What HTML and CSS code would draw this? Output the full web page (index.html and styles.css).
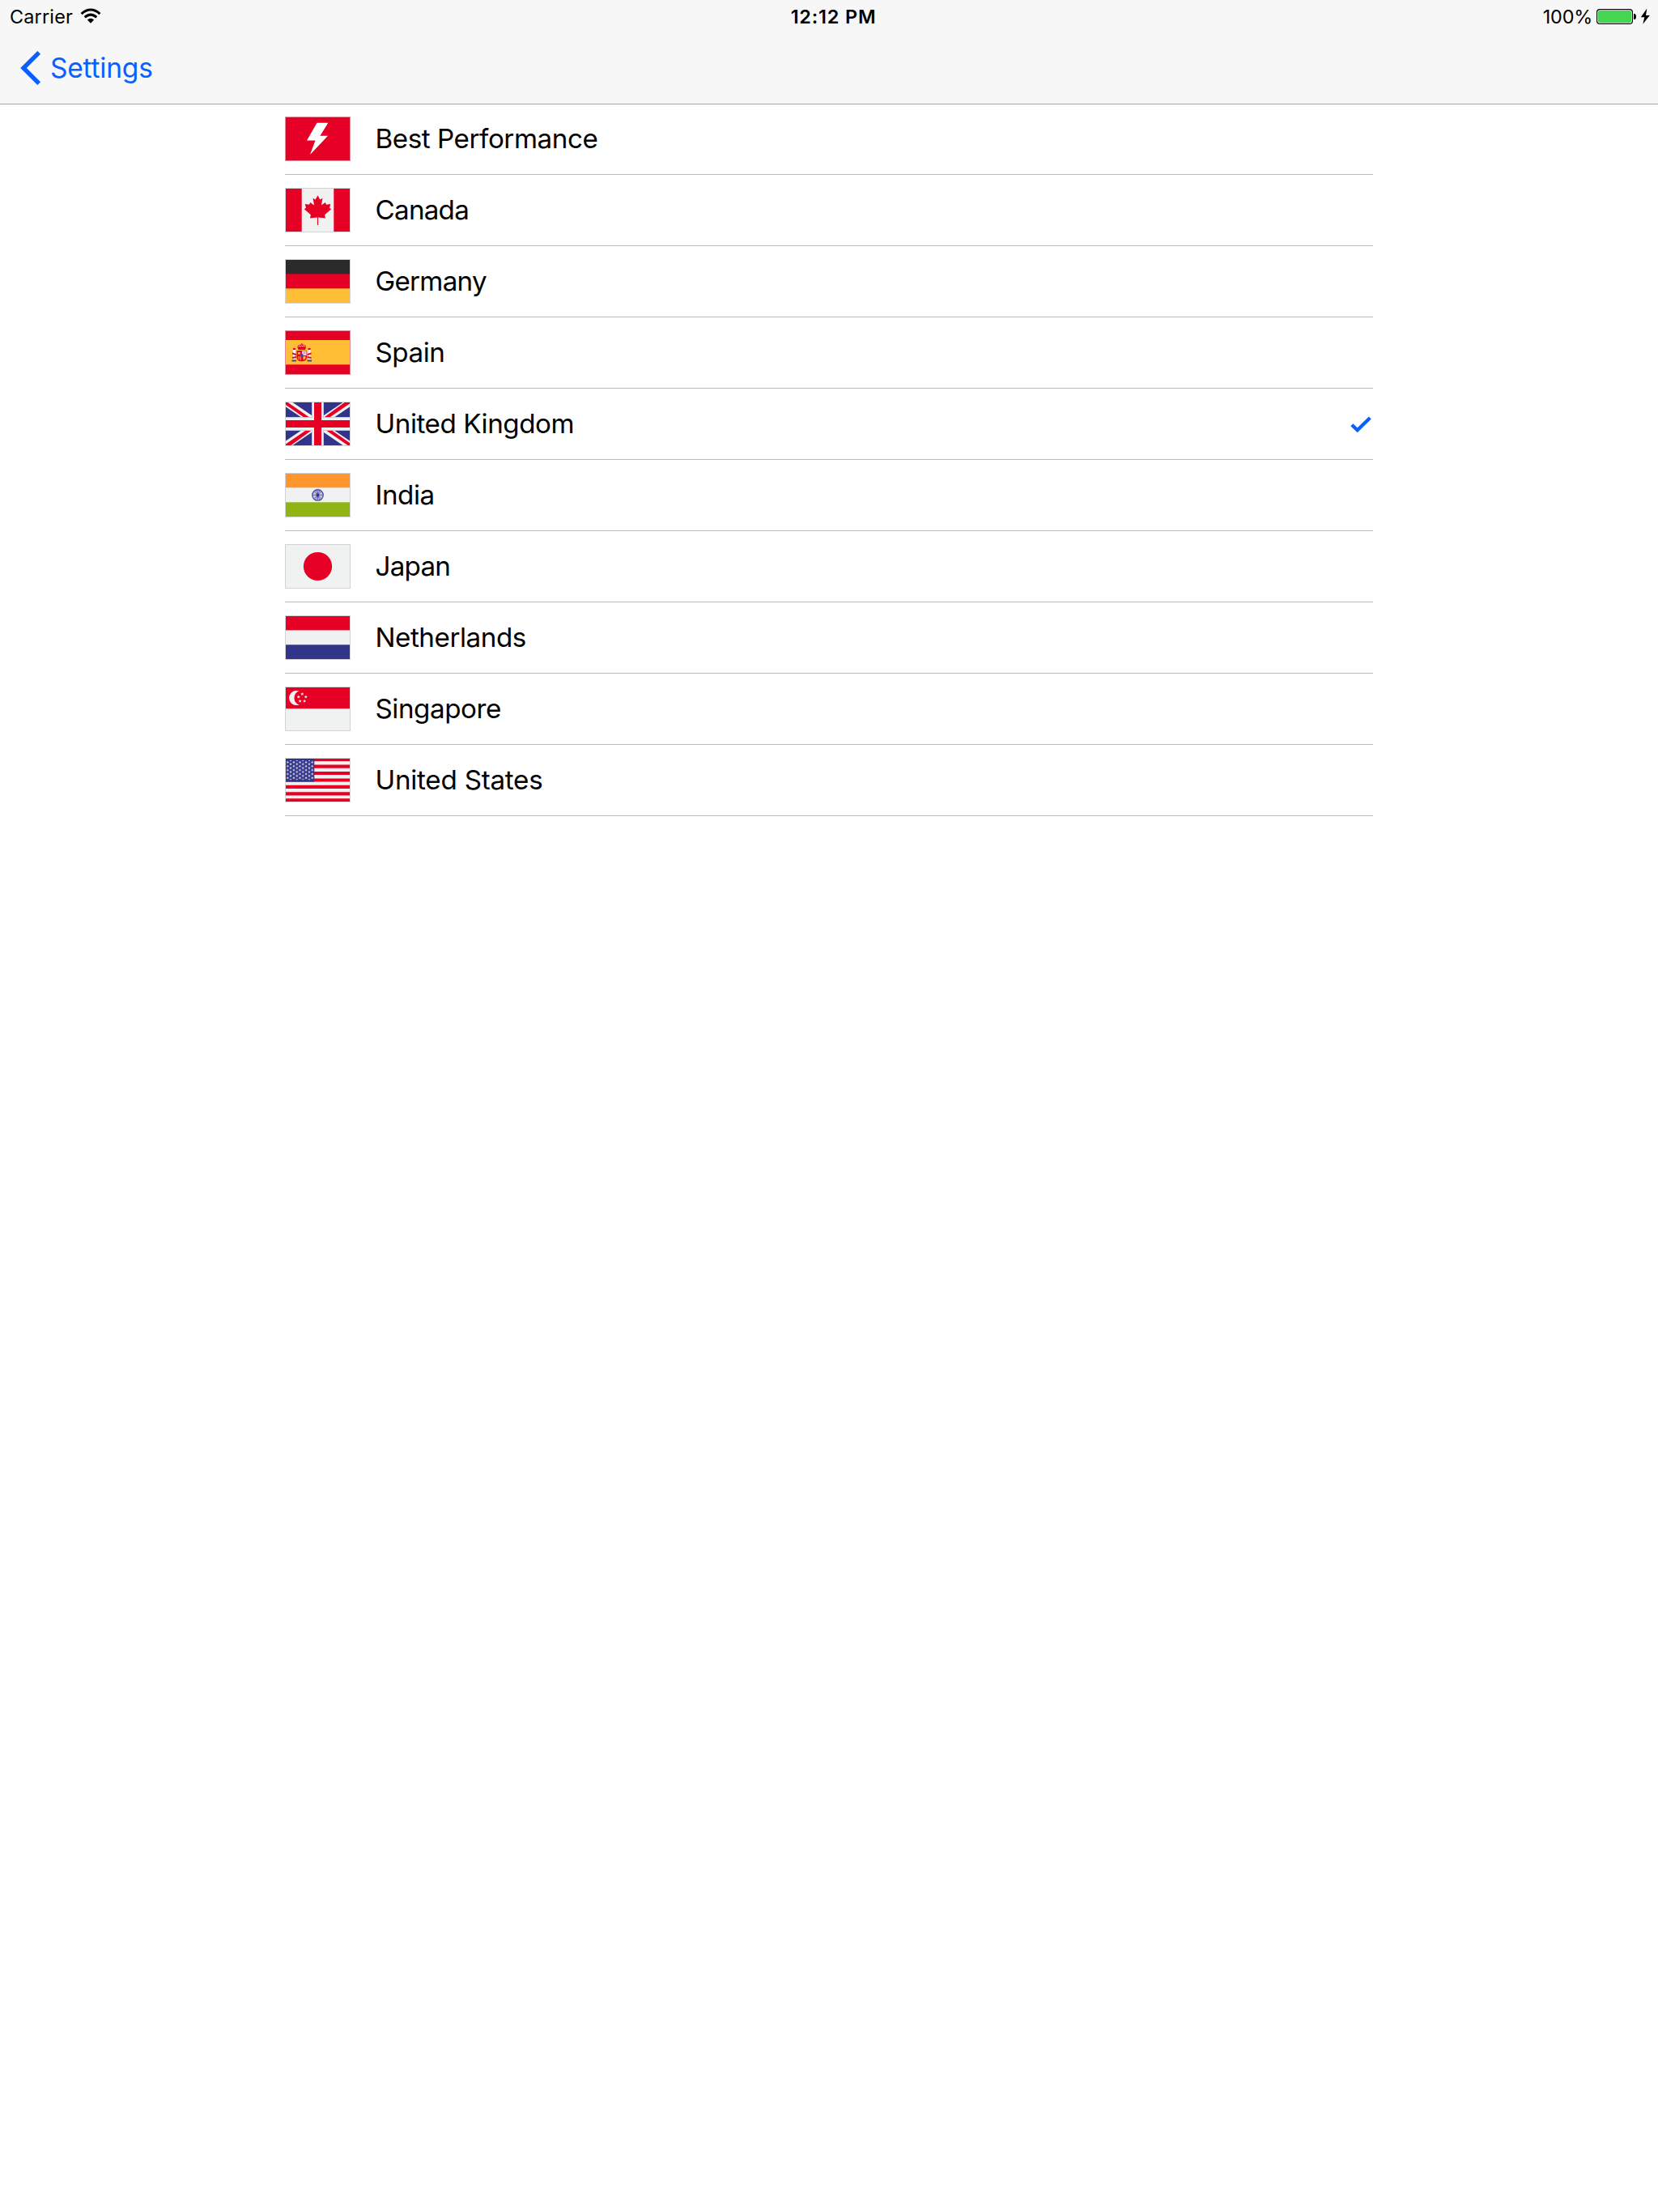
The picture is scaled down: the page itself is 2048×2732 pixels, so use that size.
FILE: index.html
```html
<!DOCTYPE html>
<html lang="en">
<head>
<meta charset="utf-8">
<title>Settings</title>
<link rel="stylesheet" href="styles.css">
</head>
<body>
<header class="header">
  <div class="status">
    <div class="status-side">
      <span class="carrier">Carrier</span>
      <svg class="wifi" width="26" height="20" viewBox="0 0 26 20">
        <path d="M1.600 7.100Q13-3 24.400 7.100" fill="none" stroke="#000" stroke-width="3"/>
        <path d="M5.700 11.400Q13 4.800 20.300 11.400" fill="none" stroke="#000" stroke-width="3"/>
        <path d="M8.800 14.400Q13 11.100 17.200 14.400L13 18.700Z"/>
      </svg>
    </div>
    <span class="clock">12:12 PM</span>
    <div class="status-side status-right">
      <span class="percent">100%</span>
      <svg class="battery" width="67" height="20" viewBox="0 0 67 20">
        <rect x=".6" y=".6" width="43.800" height="17.800" rx="3.500" fill="#fff" stroke="#000" stroke-width="1.200"/>
        <rect x="2" y="2" width="41" height="15" rx="2" fill="#44d551"/>
        <path d="M46 6h1.500q1.500 1 1.500 3.500t-1.500 3.500H46Z"/>
        <path d="M62.300-.5 54.800 10.200H59.300L57.300 18.800 65.800 8H61Z"/>
      </svg>
    </div>
  </div>
  <nav class="nav">
    <a class="back">
      <svg width="26" height="42" viewBox="0 0 26 42"><path d="M23.200 1.900 4 21 23.200 40.100" fill="none" stroke="#0a60ff" stroke-width="5.400"/></svg>
      <span>Settings</span>
    </a>
  </nav>
</header>
<main class="list">
  <div class="row">
    <svg class="flag" viewBox="0 0 81 55">
      <rect width="81" height="55" fill="#e60026"/>
      <path d="M39.500 7.700H53.300L43.400 23.700H53L31 47 37.500 29.500H27Z" fill="#fff"/>
      <rect class="edge edge-pink" x=".5" y=".5" width="80" height="54"/>
    </svg>
    <span class="label">Best Performance</span>
  </div>
  <div class="row">
    <svg class="flag" viewBox="0 0 81 55">
      <rect width="81" height="55" fill="#f0f2f1"/>
      <path d="M0 0H20.700V55H0ZM60.300 0H81V55H60.300Z" fill="#e60026"/>
      <path d="M40.500 9.200 43.300 14.500 46.500 12.700 44.900 21.500 49.800 17.900 51 20.800 56.300 20 55 24.700 57.200 26.200 49.200 33.300 50 37.500 41.100 36.500V46H39.900V36.500L31 37.500 31.800 33.300 23.800 26.200 26 24.700 24.700 20 30 20.800 31.200 17.900 36.100 21.500 34.500 12.700 37.700 14.500Z" fill="#e60026"/>
      <rect class="edge" x=".5" y=".5" width="80" height="54"/>
    </svg>
    <span class="label label-tight">Canada</span>
  </div>
  <div class="row">
    <svg class="flag" viewBox="0 0 81 55">
      <rect width="81" height="55" fill="#ffbe35"/>
      <rect width="81" height="36.300" fill="#e60026"/>
      <rect width="81" height="18.300" fill="#2b2b2b"/>
      <rect class="edge" x=".5" y=".5" width="80" height="54"/>
    </svg>
    <span class="label label-tight">Germany</span>
  </div>
  <div class="row">
    <svg class="flag" viewBox="0 0 81 55">
      <rect width="81" height="55" fill="#e60026"/>
      <rect y="12" width="81" height="30.300" fill="#ffbe35"/>
      <path d="M10 24h3v12h-3zM28.500 24h3v12h-3z" fill="#f0f2f1"/>
      <path d="M10 22h3v2h-3zM28.500 22h3v2h-3zM9 27.500l5 1.500v2l-5-1.500zM32.500 27.500l-5 1.500v2l5-1.500zM9 33l5-1v2l-5 1zM32.500 33l-5-1v2l5 1z" fill="#e60026"/>
      <path d="M8.500 36.500h5.500v2H8.500zM27.500 36.500H33v2H27.500z" fill="#3a4a9c"/>
      <path d="M15.500 21Q15 18 20.700 17.600 26.500 18 26 21L25 24H16.500Z" fill="#e60026"/>
      <path d="M16.500 20.500 18 18.800 19.500 20 20.700 18.500 22 20 23.500 18.800 25 20.500" fill="none" stroke="#f3d8c0" stroke-width="1"/>
      <rect x="20" y="16.300" width="1.500" height="2" fill="#e60026"/>
      <path d="M14.500 25H27V33Q27 38.300 20.700 38.300T14.500 33Z" fill="#e60026"/>
      <path d="M21 25.500h5.500v5.500H21z" fill="#f5dcea"/>
      <circle cx="24" cy="28" r="1.600" fill="#ef8fc4"/>
      <path d="M16 27h3v2.500h-3zM22.500 32h3v2q-.5 2-3 2.500zM16.500 32h1v4h-1zM18.700 32h1v5h-1z" fill="#ffbe35"/>
      <circle cx="20.700" cy="30.700" r="2" fill="#2a50c0"/>
      <rect class="edge edge-pink" x=".5" y=".5" width="80" height="54"/>
    </svg>
    <span class="label">Spain</span>
  </div>
  <div class="row">
    <svg class="flag" viewBox="0 0 81 55">
      <rect width="81" height="55" fill="#f0f2f1"/>
      <g id="jack-half">
        <path d="M9.500 1H33V17ZM1 6.500V20H21ZM71.500 1H48V17ZM80 6.500V20H60Z" fill="#32348a"/>
        <path d="M1 1V4L24 20H31L3.500 1ZM73.500 1H80V2.500L54.500 20H47.500Z" fill="#e60026"/>
      </g>
      <use href="#jack-half" transform="rotate(180 40.500 27.500)"/>
      <path d="M33.500 1V19.500H1M47.500 1V19.500H80M33.500 54V35.500H1M47.500 54V35.500H80" fill="none" stroke="#c9cad8"/>
      <path d="M36 0H45V23H81V32H45V55H36V32H0V23H36Z" fill="#e60026"/>
      <rect class="edge" x=".5" y=".5" width="80" height="54"/>
    </svg>
    <span class="label">United Kingdom</span>
    <svg class="check" width="28" height="22" viewBox="0 0 28 22"><path d="M1.800 10.800 8.700 17.300 24.300 2" fill="none" stroke="#0a60ff" stroke-width="4.300"/></svg>
  </div>
  <div class="row">
    <svg class="flag" viewBox="0 0 81 55">
      <rect width="81" height="55" fill="#90b414"/>
      <rect width="81" height="36.300" fill="#f0f2f1"/>
      <rect width="81" height="18.300" fill="#ff962d"/>
      <circle cx="40.500" cy="27.400" r="6.700" fill="#c4c6e0" stroke="#4b4f9f" stroke-width="1.400"/>
      <path d="M40.500 21.500V33.500M34.500 27.400H46.500M36.300 23.200 44.700 31.600M44.700 23.200 36.300 31.600M38.300 22 42.700 32.800M42.700 22 38.300 32.800" stroke="#5659a6" stroke-width=".8"/>
      <circle cx="40.500" cy="27.400" r="2" fill="#32348a"/>
      <rect class="edge" x=".5" y=".5" width="80" height="54"/>
    </svg>
    <span class="label">India</span>
  </div>
  <div class="row">
    <svg class="flag" viewBox="0 0 81 55">
      <rect width="81" height="55" fill="#f0f2f1"/>
      <circle cx="40.500" cy="27.500" r="17.600" fill="#e60026"/>
      <rect class="edge" x=".5" y=".5" width="80" height="54"/>
    </svg>
    <span class="label label-tight">Japan</span>
  </div>
  <div class="row">
    <svg class="flag" viewBox="0 0 81 55">
      <rect width="81" height="55" fill="#32348a"/>
      <rect width="81" height="36.300" fill="#f0f2f1"/>
      <rect width="81" height="18.400" fill="#e60026"/>
      <rect class="edge" x=".5" y=".5" width="80" height="54"/>
    </svg>
    <span class="label">Netherlands</span>
  </div>
  <div class="row">
    <svg class="flag" viewBox="0 0 81 55">
      <defs><path id="star" d="M0-2.200.6-.7 2.100-.7.900.3 1.300 1.800 0 .9-1.300 1.800-.9.300-2.100-.7-.6-.7Z"/></defs>
      <rect width="81" height="55" fill="#f0f2f1"/>
      <rect width="81" height="27.200" fill="#e60026"/>
      <g fill="#f0f2f1">
        <path d="M17.500 5.500A9.100 9.100 0 1 0 17.500 22.500 9 9 0 0 1 17.500 5.500Z"/>
        <use href="#star" x="21.300" y="9.200"/><use href="#star" x="16.800" y="12.700"/><use href="#star" x="25.800" y="12.700"/><use href="#star" x="18.600" y="17.900"/><use href="#star" x="24.100" y="17.900"/>
      </g>
      <rect class="edge" x=".5" y=".5" width="80" height="54"/>
    </svg>
    <span class="label">Singapore</span>
  </div>
  <div class="row">
    <svg class="flag" viewBox="0 0 81 55">
      <defs>
        <pattern id="stars" x="-.5" y="2.900" width="7.600" height="4.850" patternUnits="userSpaceOnUse">
          <g fill="#f0f2f1"><use href="#star" transform="translate(3.800 2.425) scale(.85)"/><use href="#star" transform="translate(0 0) scale(.85)"/><use href="#star" transform="translate(7.600 0) scale(.85)"/><use href="#star" transform="translate(0 4.850) scale(.85)"/><use href="#star" transform="translate(7.600 4.850) scale(.85)"/></g>
        </pattern>
      </defs>
      <rect width="81" height="55" fill="#f0f2f1"/>
      <path d="M0 2.100H81M0 10.560H81M0 19.020H81M0 27.480H81M0 35.940H81M0 44.400H81M0 52.300H81" stroke="#e60026" stroke-width="4.150"/>
      <rect width="36.300" height="29.600" fill="#32348a"/>
      <rect x="1.500" y="3" width="34" height="24.200" fill="url(#stars)"/>
      <rect class="edge" x=".5" y=".5" width="80" height="54"/>
    </svg>
    <span class="label label-wide">United States</span>
  </div>
</main>
</body>
</html>
```
FILE: styles.css
```css
* { box-sizing: border-box; }

body {
  margin: 0;
  min-height: 2732px;
  background: #fff;
  color: #000;
  font-family: Inter, "Liberation Sans", sans-serif;
}

.header {
  height: 128px;
  background: #f7f7f7;
  box-shadow: 0 1px 0 #a7a7aa;
}

.status {
  display: grid;
  grid-template-columns: 1fr auto 1fr;
  height: 40px;
  padding: 0 9px 0 12px;
  font-size: 23.400px;
  line-height: 41px;
}

.status-side { display: flex; align-items: flex-start; }
.status-right { justify-content: flex-end; }
.carrier { letter-spacing: 0.200px; }
.wifi { margin: 10px 0 0 9px; }
.clock { font-weight: 600; letter-spacing: 0.850px; padding-left: 8px; }
.percent { letter-spacing: -0.200px; }
.battery { margin: 11px 0 0 5px; overflow: visible; }

.nav { height: 88px; padding-left: 25px; }

.back {
  display: inline-flex;
  gap: 11px;
  color: #0a60ff;
  font-size: 33.500px;
  line-height: 89px;
  letter-spacing: -0.200px;
}
.back svg { margin-top: 23px; }

.list { width: 1344px; margin: 0 auto; }

.row {
  display: flex;
  align-items: flex-start;
  height: 88px;
  padding-top: 16px;
  border-bottom: 1px solid #bcbcbe;
}

.flag { flex: none; width: 81px; height: 55px; }
.edge { fill: none; stroke: #d3d2d4; }
.edge-pink { stroke: #e08b97; }

.label {
  margin-left: 30.500px;
  font-size: 33.200px;
  line-height: 55px;
  letter-spacing: -0.450px;
}
.label-tight { letter-spacing: -0.750px; }
.label-wide { letter-spacing: -0.250px; }

.check { margin: 18px 0 0 auto; }
```
